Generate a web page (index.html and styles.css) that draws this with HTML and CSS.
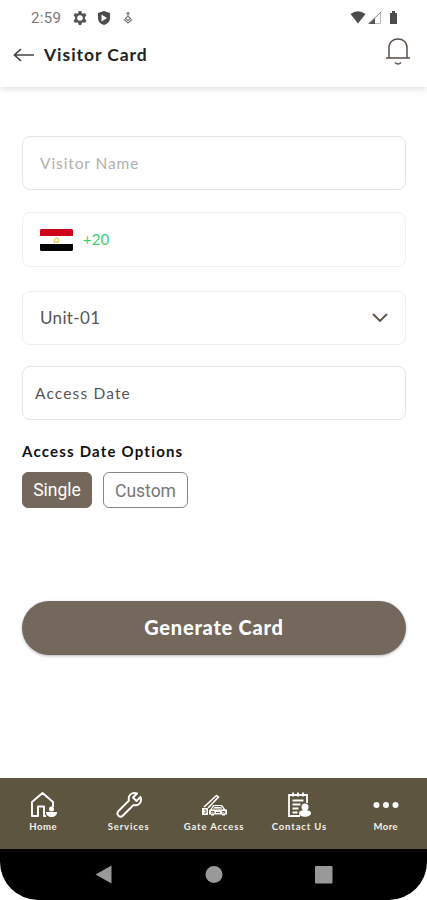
FILE: index.html
```
<!DOCTYPE html>
<html lang="en">
<head>
<meta charset="utf-8">
<title>Visitor Card</title>
<link rel="stylesheet" href="styles.css">
</head>
<body>
<div class="screen">
  <header class="top">
    <div class="status">
      <span class="clock">2:59</span>
      <svg class="gear" width="14" height="14" viewBox="0 0 14 14"><path fill="#555" fill-rule="evenodd" d="M5.700 0h2.600l.5 2 1.200.7 2-.6 1.400 2.300L12 6v2l1.400 1.600-1.400 2.300-2-.6-1.200.7-.5 2H5.700l-.5-2-1.200-.7-2 .6L.6 9.600 2 8V6L.6 4.400 2 2.100l2 .6L5.200 2zM7 4.200a2.800 2.800 0 1 0 0 5.600 2.800 2.800 0 0 0 0-5.600z"/></svg>
      <svg class="shield" width="12" height="14" viewBox="0 0 12 14"><path fill="#4d4d4d" fill-rule="evenodd" d="M6 0l6 2v5c0 3.500-2.500 6-6 7-3.500-1-6-3.500-6-7V2zM3.500 3.500v7L9 7z"/></svg>
      <svg class="debug" width="10" height="13" viewBox="0 0 10 13"><g fill="none" stroke="#777" stroke-width="1.100"><path d="M5 1v4M3.500 3L5 1.500 6.500 3M1 8.500l4 3.500 4-3.500M5 5L2.500 7.500 5 9.500l2.500-2z"/></g></svg>
      <span class="grow"></span>
      <svg width="50" height="15" viewBox="0 0 50 15"><path fill="#4b4b4b" d="M1.500 4Q9-1.500 16.500 4L9 13.500zM41 3h2V1h3v2h2v11h-7z"/><path fill="#555" d="M19 14L26 7.500V14z"/><path fill="none" stroke="#888" d="M20 13.500L32 2"/><path fill="none" stroke="#bbb" d="M31.500 3v10.500H26"/></svg>
    </div>
    <div class="appbar">
      <svg width="22" height="14" viewBox="0 0 22 14"><path fill="none" stroke="#444" stroke-width="1.700" d="M21 7H1.500M8 1L1.500 7 8 13"/></svg>
      <h1>Visitor Card</h1>
      <span class="grow"></span>
      <svg class="bell" width="26" height="29" viewBox="0 0 26 29"><path fill="none" stroke="#5e5048" stroke-width="1.500" d="M5 20.500V10.500C5 5 9 2 14 2s9 3 9 8.500v10M2 21h24M11 25.500q3 3 6 0"/></svg>
    </div>
  </header>
  <main class="form">
    <div class="field name"><span>Visitor Name</span></div>
    <div class="field phone">
      <svg width="33" height="22" viewBox="0 0 33 22"><path fill="#fff" d="M0 0h33v22H0z"/><path fill="#d0021b" d="M1 0h31l1 1v6H0V1z"/><path fill="#050505" d="M0 15h33v6l-1 1H1l-1-1z"/><path fill="none" stroke="#e6cd67" stroke-width="1.300" d="M14.500 13v-2.500l2-1.500 2 1.500V13zM14 13.200h5"/></svg>
      <span>+20</span>
    </div>
    <div class="field unit"><span>Unit-01</span><i class="grow"></i><svg width="16" height="10" viewBox="0 0 16 10"><path fill="none" stroke="#5b5046" stroke-width="1.800" d="M1 1l7 7 7-7"/></svg></div>
    <div class="field date"><span>Access Date</span></div>
    <h2>Access Date Options</h2>
    <div class="chips"><button class="chip on"><span>Single</span></button><button class="chip"><span>Custom</span></button></div>
    <button class="submit"><span>Generate Card</span></button>
  </main>
  <nav class="tabs">
    <a><svg width="28" height="28" viewBox="0 0 28 28"><path fill="none" stroke="#fff" stroke-width="1.900" stroke-linejoin="round" d="M24 16v-5L13.500 2 3 11v14h6v-9.500h6V25h2"/><circle fill="#fff" cx="22.500" cy="18" r="2.500"/><path fill="#fff" d="M17 21h11c0 3.500-2.500 5-5.500 5S17 24.500 17 21z"/></svg><span class="short">Home</span></a>
    <a><svg class="wrench" width="28" height="28" viewBox="0 0 28 28"><path fill="none" stroke="#fff" stroke-width="1.900" stroke-linejoin="round" d="M22 2.500c-5-2-9.500 2-8 7L3.500 20c-3 3.500 1.500 7.500 4.500 4.500L18.500 14c5 1.500 9-3 7-8l-4 4-3.500-3.500z"/></svg><span>Services</span></a>
    <a><svg class="gate" width="28" height="28" viewBox="0 0 28 28"><path fill="none" stroke="#fff" stroke-width="1.600" d="M4 16L16.500 4.500l2 1.500L8 17"/><path fill="#fff" d="M2 17h6v7H2zM13 14h9l3 4 2 1v4.500h-2v1h-3v-1h-8v1h-3v-1H9v-4l2-2z"/><path stroke="#5d5540" stroke-width=".9" fill="none" d="M4 19h2v3H4M14 15.500h7l2 2.500H12.500zM11 20.500h3v1.500h-3M22 20.500h3v1.500h-3M16 21.500h4"/></svg><span>Gate Access</span></a>
    <a><svg width="28" height="28" viewBox="0 0 28 28"><path fill="none" stroke="#fff" stroke-width="1.800" d="M15 25H4V4h18v8M8 1.500v4M13 1.500v4M18 1.500v4M7.500 9.500h11M7.500 13.500h8M7.500 17.500h6M7.500 21.500h5"/><circle fill="#fff" cx="20" cy="16" r="3.500"/><path fill="#fff" d="M14 22c0-4 12-4 12 0 0 5-12 5-12 0z"/></svg><span>Contact Us</span></a>
    <a><svg class="dots" width="28" height="28" viewBox="0 0 28 28"><g fill="#fff"><circle cx="4.500" cy="14" r="3"/><circle cx="14" cy="14" r="3"/><circle cx="23.500" cy="14" r="3"/></g></svg><span class="short">More</span></a>
  </nav>
  <footer class="system">
    <svg width="18" height="20" viewBox="0 0 18 20"><path fill="#999" d="M16.500 .5v18L.5 9.500z"/></svg>
    <svg width="18" height="18" viewBox="0 0 18 18"><circle cx="9" cy="8.500" r="8.500" fill="#999"/></svg>
    <svg width="18" height="18" viewBox="0 0 18 18"><rect width="17.500" height="17.500" rx="1" fill="#999"/></svg>
  </footer>
</div>
</body>
</html>
```
FILE: styles.css
```
* { box-sizing: border-box; }
body { margin: 0; background: #fff; font-family: Lato, "Open Sans", sans-serif; }
.screen { width: 427px; height: 900px; display: flex; flex-direction: column; overflow: hidden; }
.grow { flex: 1; }
span { white-space: nowrap; }
svg { display: block; flex: none; }
h1, h2 { margin: 0; white-space: nowrap; }
button { font-family: inherit; border: 0; padding: 0; }

.top { height: 87px; flex: none; box-shadow: 0 2px 7px rgba(0,0,0,.13); }
.status { height: 35px; padding: 0 28px 0 31px; display: flex; align-items: center; }
.clock { width: 30px; font: 15px/18px Roboto, sans-serif; letter-spacing: .3px; color: #777; }
.gear { margin-left: 12px; }
.shield { margin-left: 11px; }
.debug { margin-left: 13px; }
.appbar { height: 40px; padding: 0 17px 0 13px; display: flex; align-items: center; }
.appbar h1 { margin-left: 9px; font: 700 17.5px/24px Lato, sans-serif; letter-spacing: .95px; color: #222; }
.bell { position: relative; top: -4px; }

.form { flex: 1; padding: 49px 21px 0 22px; display: flex; flex-direction: column; }
.field { height: 54px; flex: none; border: 1px solid #e5e5e5; border-radius: 8px; padding: 0 17px 1px; display: flex; align-items: center; }
.name { font-size: 15.500px; color: #b0b0b0; letter-spacing: .9px; }
.phone { height: 55px; margin-top: 22px; border-color: #f0f0f0; color: #3dcf74; font-size: 15px; padding-bottom: 0; }
.phone span { margin: -1px 0 0 10px; }
.unit { margin-top: 24px; border-color: #eee; color: #555; font-size: 17px; letter-spacing: .35px; }
.date { margin-top: 21px; padding-left: 12px; color: #555; font-size: 15.500px; letter-spacing: 1.15px; }
.form h2 { margin-top: 21px; font: 700 15px/20px Lato, sans-serif; letter-spacing: 1.2px; color: #111; }
.chips { margin-top: 11px; display: flex; gap: 11px; }
.chip { width: 85px; height: 36px; border: 1px solid #8d8681; border-radius: 6px; background: #fff; color: #777; font: 17.500px/22px Roboto, sans-serif; padding-top: 1px; }
.chip.on { width: 70px; background: #74685d; border-color: #74685d; color: #fff; padding-top: 0; }
.submit { height: 54px; margin-top: 93px; flex: none; border-radius: 27px; background: #74685d; box-shadow: 0 1px 3px rgba(0,0,0,.3); color: #fff; font-size: 20px; font-weight: 900; letter-spacing: .75px; padding-bottom: 2px; }

.tabs { height: 71px; flex: none; display: grid; grid-template-columns: repeat(5, 1fr); background: #5d5540; }
.tabs a { display: flex; flex-direction: column; align-items: center; padding-top: 13px; color: #f4f2ec; font-size: 9.500px; line-height: 14px; font-weight: 700; }
.tabs svg { margin-left: 1px; }
.tabs .wrench { margin-left: 2px; }
.tabs .gate { margin-left: 1px; }
.tabs .dots { margin-left: 3px; }
.tabs span { margin: 1px 0 0 1px; letter-spacing: .85px; }
.tabs .short { letter-spacing: .5px; }
.tabs a:last-child .short { margin-left: 3px; }
.system { height: 51px; flex: none; display: flex; align-items: center; justify-content: center; gap: 92px; background: #000; border-radius: 0 0 38px 38px; }
```
